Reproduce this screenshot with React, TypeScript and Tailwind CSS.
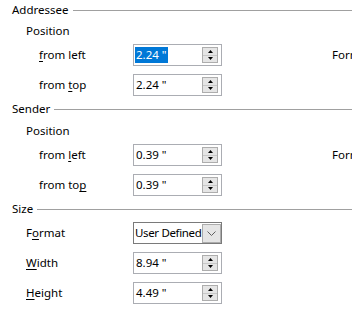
import React from "react";

const font = { fontFamily: '"Noto Sans", "Open Sans", sans-serif' };

function U({ children }: { children: React.ReactNode }) {
  return <span className="underline underline-offset-2 decoration-1">{children}</span>;
}

function Spin() {
  return (
    <div className="absolute right-[3px] top-[2px] w-[16px] h-[16px] border border-[#adadad] bg-[#e5e5e5] flex flex-col">
      <div className="flex-1 flex items-center justify-center border-b border-[#c8c8c8]">
        <svg width="5" height="3" viewBox="0 0 5 3"><polygon points="2.5,0 5,3 0,3" fill="#000" /></svg>
      </div>
      <div className="flex-1 flex items-center justify-center">
        <svg width="5" height="3" viewBox="0 0 5 3"><polygon points="0,0 5,0 2.5,3" fill="#000" /></svg>
      </div>
    </div>
  );
}

function Field({ value, selected }: { value: string; selected?: boolean }) {
  return (
    <div className="relative shrink-0 w-[89px] h-[22px] border border-[#abadb3] bg-white flex items-center pl-[1px]">
      {selected ? (
        <span className="bg-[#0078d7] text-white leading-[16px] h-[16px] px-[1px]">{value}</span>
      ) : (
        <span className="px-[1px] leading-[16px]">{value}</span>
      )}
      <Spin />
    </div>
  );
}

function Select({ value }: { value: string }) {
  return (
    <div className="relative shrink-0 w-[89px] h-[22px] border border-[#7a7a7a] bg-white flex items-center pl-[1px]">
      <span className="leading-[16px] whitespace-nowrap tracking-[-0.35px]">{value}</span>
      <div className="absolute right-0 top-[1px] w-[19px] h-[19px] border border-[#acacac] bg-[#e5e5e5] flex items-center justify-center">
        <svg width="9" height="5" viewBox="0 0 9 5"><polyline points="0.5,0.5 4.5,4.5 8.5,0.5" fill="none" stroke="#606060" strokeWidth="1" /></svg>
      </div>
    </div>
  );
}

function Header({ title, mt }: { title: string; mt?: string }) {
  return (
    <div className={`flex items-center h-[20px] pl-[12px] ${mt ?? ""}`}>
      <span>{title}</span>
      <div className="flex-1 h-px bg-[#a0a0a0] ml-[4px]" />
    </div>
  );
}

function Row({ label, children, extra, mt, indent }: { label: React.ReactNode; children: React.ReactNode; extra?: string; mt: string; indent: string }) {
  return (
    <div className={`flex items-center h-[22px] ${mt}`}>
      <div className={`w-[133px] shrink-0 ${indent}`}>{label}</div>
      {children}
      {extra && <div className="ml-[110px] shrink-0 whitespace-nowrap">{extra}</div>}
    </div>
  );
}

export default function App() {
  return (
    <div className="w-[352px] h-[325px] overflow-hidden bg-white text-black text-[11.5px]" style={font}>
      <Header title="Addressee" />
      <div className="h-[20px] mt-px pl-[26px] flex items-center">Position</div>
      <Row mt="mt-[3px]" indent="pl-[39px]" label={<><U>f</U>rom left</>} extra="Format">
        <Field value={'2.24 "'} selected />
      </Row>
      <Row mt="mt-[8px]" indent="pl-[39px]" label={<>from <U>t</U>op</>}>
        <Field value={'2.24 "'} />
      </Row>

      <Header title="Sender" mt="mt-[3px]" />
      <div className="h-[20px] mt-[2px] pl-[26px] flex items-center">Position</div>
      <Row mt="mt-[3px]" indent="pl-[39px]" label={<>from <U>l</U>eft</>} extra="Format">
        <Field value={'0.39 "'} />
      </Row>
      <Row mt="mt-[8px]" indent="pl-[39px]" label={<>from to<U>p</U></>}>
        <Field value={'0.39 "'} />
      </Row>

      <Header title="Size" mt="mt-[3px]" />
      <Row mt="mt-[3px]" indent="pl-[26px]" label={<>F<U>o</U>rmat</>}>
        <Select value="User Defined" />
      </Row>
      <Row mt="mt-[8px]" indent="pl-[26px]" label={<><U>W</U>idth</>}>
        <Field value={'8.94 "'} />
      </Row>
      <Row mt="mt-[8px]" indent="pl-[26px]" label={<><U>H</U>eight</>}>
        <Field value={'4.49 "'} />
      </Row>
    </div>
  );
}
